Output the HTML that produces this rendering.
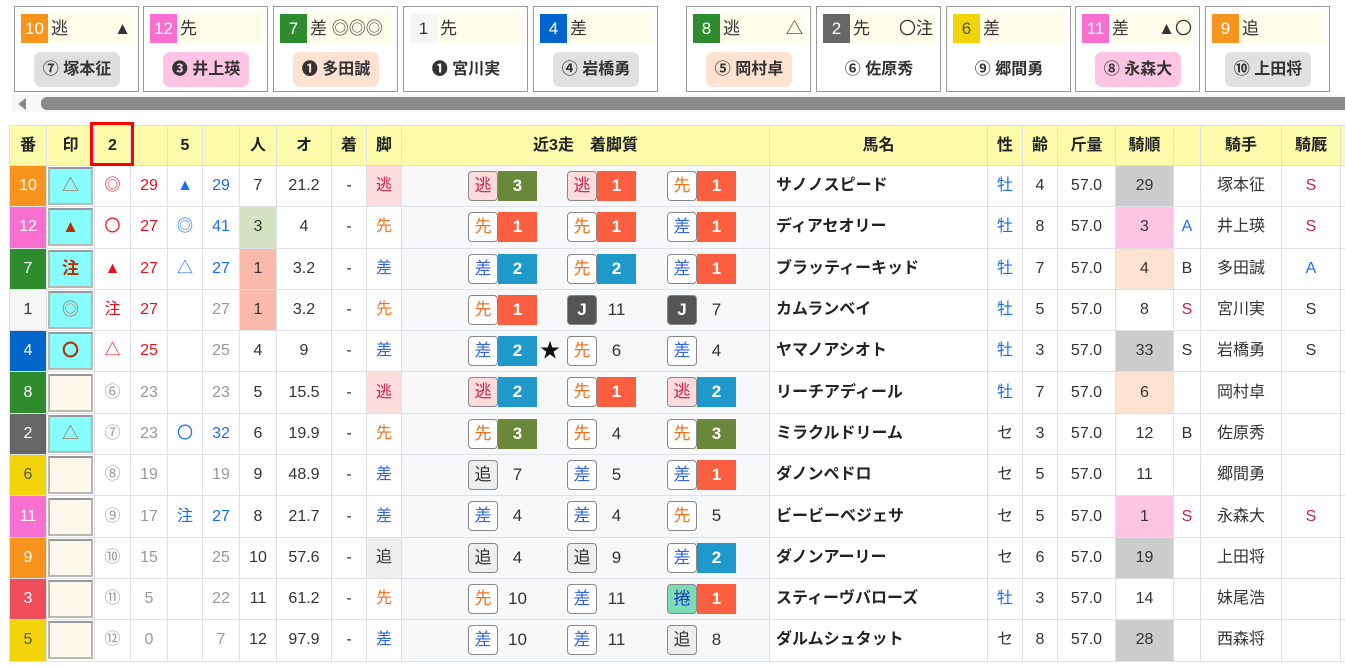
<!DOCTYPE html>
<html><head><meta charset="utf-8">
<style>
*{box-sizing:border-box;margin:0;padding:0}
body{width:1345px;height:666px;overflow:hidden;background:#fff;font-family:"Liberation Sans","Noto Sans CJK JP",sans-serif;color:#333;font-size:16px;position:relative}
.card{position:absolute;top:6px;width:125px;height:86px;border:1px solid #999;background:#fff}
.bar{position:absolute;left:6px;top:7px;width:112px;height:29px;background:#fdfde9;font-size:17px;line-height:29px}
.bar .w{display:inline-block;width:27px;height:29px;text-align:center;color:#fff;font-size:17px;vertical-align:top}
.bar .t{margin-left:3px}
.bar .m{position:absolute;right:2px;top:0}
.pill{position:absolute;left:19px;top:45px;width:86px;height:35px;border-radius:7px;text-align:center;line-height:35px;font-size:16px;font-weight:bold;color:#333}
.sb{position:absolute;left:12px;top:95px;width:1333px;height:17px;background:#f8f8f8}
.sb .th{position:absolute;left:29px;top:2px;right:0;height:13px;background:#8a8a8a;border-radius:6px 0 0 6px}
.sb .ar{position:absolute;left:6px;top:3px;width:0;height:0;border-top:6px solid transparent;border-bottom:6px solid transparent;border-right:8px solid #888}
table{position:absolute;left:9px;top:125px;border-collapse:collapse;table-layout:fixed;width:1351px}
td,th{border:1px solid #dde0e6;text-align:center;white-space:nowrap;overflow:hidden;padding:0;line-height:20px;vertical-align:middle}
th{height:40px;background:#fbfbaa;font-weight:bold;color:#222;font-size:16px}
td{height:41.3px;font-size:16px}
.red{color:#e8101c}.blu{color:#1a6fe8}.gry{color:#999}
.hn{text-align:left;padding-left:6px;font-weight:bold;color:#222}
.mk{padding:1px}
.mk div{height:38px;border:2px solid #b8b8b0;border-top-color:#999;line-height:34px;font-size:17px;color:#b05a40}
.cy{background:#88fdfd}.bg{background:#fdf8ec}
.r3{position:relative;background:#f7f8fa}
.r3 i{font-style:normal;position:absolute;top:5px;text-align:center}
.b{width:30px;height:30px;border:1px solid #888;border-radius:4px;line-height:28px;font-size:17px;background:#fff}
.n{width:39px;height:30px;line-height:30px;color:#fff;font-weight:bold;font-size:17px}
.p{width:39px;height:30px;line-height:30px;color:#333;font-size:17px}
.e{background:#fddcdc;color:#c8204f}.s{color:#f07020}.z{color:#3366dd}.o{background:#eee;color:#333}.j{background:#555;color:#fff;font-weight:bold}.k{background:#7ddbb5;color:#1a3fc0}
.c1{background:#fc5f3f}.c2{background:#1f99c9}.c3{background:#6b873a}
.w{color:#fff}
.ws1{background:#f7941d}.ws2{background:#f86fcf}.ws3{background:#2e8b2e}.ws4{background:#f5f5f5;color:#333!important}.ws5{background:#0066cc}.ws6{background:#666}.ws7{background:#f1d40a;color:#555!important}.ws8{background:#ee4d5a}
</style></head><body>

<div class="card" style="left:14px"><div class="bar"><span class="w ws1">10</span><span class="t">逃</span><span class="m">▲</span></div><div class="pill" style="background:#e0e0e0">⑦ 塚本征</div></div>
<div class="card" style="left:143px"><div class="bar"><span class="w ws2">12</span><span class="t">先</span></div><div class="pill" style="background:#fdc4e4">❸ 井上瑛</div></div>
<div class="card" style="left:273px"><div class="bar"><span class="w ws3">7</span><span class="t">差 ◎◎◎</span></div><div class="pill" style="background:#fde2d2">❶ 多田誠</div></div>
<div class="card" style="left:403px"><div class="bar"><span class="w ws4" style="color:#333">1</span><span class="t">先</span></div><div class="pill">❶ 宮川実</div></div>
<div class="card" style="left:533px"><div class="bar"><span class="w ws5">4</span><span class="t">差</span></div><div class="pill" style="background:#e0e0e0">④ 岩橋勇</div></div>
<div class="card" style="left:686px"><div class="bar"><span class="w ws3">8</span><span class="t">逃</span><span class="m">△</span></div><div class="pill" style="background:#fde2d2">⑤ 岡村卓</div></div>
<div class="card" style="left:816px"><div class="bar"><span class="w ws6">2</span><span class="t">先</span><span class="m">〇注</span></div><div class="pill">⑥ 佐原秀</div></div>
<div class="card" style="left:946px"><div class="bar"><span class="w ws7" style="color:#555">6</span><span class="t">差</span></div><div class="pill">⑨ 郷間勇</div></div>
<div class="card" style="left:1075px"><div class="bar"><span class="w ws2">11</span><span class="t">差</span><span class="m">▲〇</span></div><div class="pill" style="background:#fdc4e4">⑧ 永森大</div></div>
<div class="card" style="left:1205px"><div class="bar"><span class="w ws1">9</span><span class="t">追</span></div><div class="pill" style="background:#e0e0e0">⑩ 上田将</div></div>

<div class="sb"><div class="ar"></div><div class="th"></div></div>

<table>
<colgroup><col style="width:37px"><col style="width:48px"><col style="width:36px"><col style="width:37px"><col style="width:35px"><col style="width:37px"><col style="width:37px"><col style="width:55px"><col style="width:35px"><col style="width:35px"><col style="width:368px"><col style="width:218px"><col style="width:35px"><col style="width:35px"><col style="width:58px"><col style="width:58px"><col style="width:27px"><col style="width:81px"><col style="width:59px"><col style="width:20px"></colgroup>
<tr><th>番</th><th>印</th><th>2</th><th></th><th>5</th><th></th><th>人</th><th>オ</th><th>着</th><th>脚</th><th>近3走　着脚質</th><th>馬名</th><th>性</th><th>齢</th><th>斤量</th><th>騎順</th><th></th><th>騎手</th><th>騎厩</th><th></th></tr>

<tr><td class="w ws1">10</td><td class="mk"><div class="cy">△</div></td><td class="red">◎</td><td class="red">29</td><td class="blu">▲</td><td class="blu">29</td><td>7</td><td>21.2</td><td>-</td><td class="e">逃</td>
<td class="r3"><i class="b e" style="left:66px">逃</i><i class="n c3" style="left:96px">3</i><i class="b e" style="left:165px">逃</i><i class="n c1" style="left:195px">1</i><i class="b s" style="left:265px">先</i><i class="n c1" style="left:295px">1</i></td>
<td class="hn">サノノスピード</td><td class="blu">牡</td><td>4</td><td>57.0</td><td style="background:#ccc">29</td><td></td><td>塚本征</td><td style="color:#c8204f">S</td><td></td></tr>

<tr><td class="w ws2">12</td><td class="mk"><div class="cy" style="color:#b83000">▲</div></td><td class="red">〇</td><td class="red">27</td><td class="blu">◎</td><td class="blu">41</td><td style="background:#d6e3c3">3</td><td>4</td><td>-</td><td class="s">先</td>
<td class="r3"><i class="b s" style="left:66px">先</i><i class="n c1" style="left:96px">1</i><i class="b s" style="left:165px">先</i><i class="n c1" style="left:195px">1</i><i class="b z" style="left:265px">差</i><i class="n c1" style="left:295px">1</i></td>
<td class="hn">ディアセオリー</td><td class="blu">牡</td><td>8</td><td>57.0</td><td style="background:#fdc4e4">3</td><td class="blu">A</td><td>井上瑛</td><td style="color:#c8204f">S</td><td></td></tr>

<tr><td class="w ws3">7</td><td class="mk"><div class="cy" style="color:#b83000;font-weight:bold">注</div></td><td class="red">▲</td><td class="red">27</td><td class="blu">△</td><td class="blu">27</td><td style="background:#fbb9a9">1</td><td>3.2</td><td>-</td><td class="z">差</td>
<td class="r3"><i class="b z" style="left:66px">差</i><i class="n c2" style="left:96px">2</i><i class="b s" style="left:165px">先</i><i class="n c2" style="left:195px">2</i><i class="b z" style="left:265px">差</i><i class="n c1" style="left:295px">1</i></td>
<td class="hn">ブラッティーキッド</td><td class="blu">牡</td><td>7</td><td>57.0</td><td style="background:#fde2d2">4</td><td>B</td><td>多田誠</td><td class="blu">A</td><td></td></tr>

<tr><td class="w ws4">1</td><td class="mk"><div class="cy">◎</div></td><td class="red">注</td><td class="red">27</td><td></td><td class="gry">27</td><td style="background:#fbb9a9">1</td><td>3.2</td><td>-</td><td class="s">先</td>
<td class="r3"><i class="b s" style="left:66px">先</i><i class="n c1" style="left:96px">1</i><i class="b j" style="left:165px">J</i><i class="p" style="left:195px">11</i><i class="b j" style="left:265px">J</i><i class="p" style="left:295px">7</i></td>
<td class="hn">カムランベイ</td><td class="blu">牡</td><td>5</td><td>57.0</td><td>8</td><td style="color:#c8204f">S</td><td>宮川実</td><td>S</td><td></td></tr>

<tr><td class="w ws5">4</td><td class="mk"><div class="cy" style="color:#b83000;font-weight:bold">〇</div></td><td class="red">△</td><td class="red">25</td><td></td><td class="gry">25</td><td>4</td><td>9</td><td>-</td><td class="z">差</td>
<td class="r3"><i class="b z" style="left:66px">差</i><i class="n c2" style="left:96px">2</i><i class="p" style="left:136px;width:24px;color:#111;font-size:20px">★</i><i class="b s" style="left:165px">先</i><i class="p" style="left:195px">6</i><i class="b z" style="left:265px">差</i><i class="p" style="left:295px">4</i></td>
<td class="hn">ヤマノアシオト</td><td class="blu">牡</td><td>3</td><td>57.0</td><td style="background:#ccc">33</td><td>S</td><td>岩橋勇</td><td>S</td><td></td></tr>

<tr><td class="w ws3">8</td><td class="mk"><div class="bg"></div></td><td class="gry">⑥</td><td class="gry">23</td><td></td><td class="gry">23</td><td>5</td><td>15.5</td><td>-</td><td class="e">逃</td>
<td class="r3"><i class="b e" style="left:66px">逃</i><i class="n c2" style="left:96px">2</i><i class="b s" style="left:165px">先</i><i class="n c1" style="left:195px">1</i><i class="b e" style="left:265px">逃</i><i class="n c2" style="left:295px">2</i></td>
<td class="hn">リーチアディール</td><td class="blu">牡</td><td>7</td><td>57.0</td><td style="background:#fde2d2">6</td><td></td><td>岡村卓</td><td></td><td></td></tr>

<tr><td class="w ws6">2</td><td class="mk"><div class="cy">△</div></td><td class="gry">⑦</td><td class="gry">23</td><td class="blu">〇</td><td class="blu">32</td><td>6</td><td>19.9</td><td>-</td><td class="s">先</td>
<td class="r3"><i class="b s" style="left:66px">先</i><i class="n c3" style="left:96px">3</i><i class="b s" style="left:165px">先</i><i class="p" style="left:195px">4</i><i class="b s" style="left:265px">先</i><i class="n c3" style="left:295px">3</i></td>
<td class="hn">ミラクルドリーム</td><td>セ</td><td>3</td><td>57.0</td><td>12</td><td>B</td><td>佐原秀</td><td></td><td></td></tr>

<tr><td class="w ws7">6</td><td class="mk"><div class="bg"></div></td><td class="gry">⑧</td><td class="gry">19</td><td></td><td class="gry">19</td><td>9</td><td>48.9</td><td>-</td><td class="z">差</td>
<td class="r3"><i class="b o" style="left:66px">追</i><i class="p" style="left:96px">7</i><i class="b z" style="left:165px">差</i><i class="p" style="left:195px">5</i><i class="b z" style="left:265px">差</i><i class="n c1" style="left:295px">1</i></td>
<td class="hn">ダノンペドロ</td><td>セ</td><td>5</td><td>57.0</td><td>11</td><td></td><td>郷間勇</td><td></td><td></td></tr>

<tr><td class="w ws2">11</td><td class="mk"><div class="bg"></div></td><td class="gry">⑨</td><td class="gry">17</td><td class="blu">注</td><td class="blu">27</td><td>8</td><td>21.7</td><td>-</td><td class="z">差</td>
<td class="r3"><i class="b z" style="left:66px">差</i><i class="p" style="left:96px">4</i><i class="b z" style="left:165px">差</i><i class="p" style="left:195px">4</i><i class="b s" style="left:265px">先</i><i class="p" style="left:295px">5</i></td>
<td class="hn">ビービーベジェサ</td><td>セ</td><td>5</td><td>57.0</td><td style="background:#fdc4e4">1</td><td style="color:#c8204f">S</td><td>永森大</td><td style="color:#c8204f">S</td><td></td></tr>

<tr><td class="w ws1">9</td><td class="mk"><div class="bg"></div></td><td class="gry">⑩</td><td class="gry">15</td><td></td><td class="gry">25</td><td>10</td><td>57.6</td><td>-</td><td class="o">追</td>
<td class="r3"><i class="b o" style="left:66px">追</i><i class="p" style="left:96px">4</i><i class="b o" style="left:165px">追</i><i class="p" style="left:195px">9</i><i class="b z" style="left:265px">差</i><i class="n c2" style="left:295px">2</i></td>
<td class="hn">ダノンアーリー</td><td>セ</td><td>6</td><td>57.0</td><td style="background:#ccc">19</td><td></td><td>上田将</td><td></td><td></td></tr>

<tr><td class="w ws8">3</td><td class="mk"><div class="bg"></div></td><td class="gry">⑪</td><td class="gry">5</td><td></td><td class="gry">22</td><td>11</td><td>61.2</td><td>-</td><td class="s">先</td>
<td class="r3"><i class="b s" style="left:66px">先</i><i class="p" style="left:96px">10</i><i class="b z" style="left:165px">差</i><i class="p" style="left:195px">11</i><i class="b k" style="left:265px">捲</i><i class="n c1" style="left:295px">1</i></td>
<td class="hn">スティーヴバローズ</td><td class="blu">牡</td><td>3</td><td>57.0</td><td>14</td><td></td><td>妹尾浩</td><td></td><td></td></tr>

<tr><td class="w ws7">5</td><td class="mk"><div class="bg"></div></td><td class="gry">⑫</td><td class="gry">0</td><td></td><td class="gry">7</td><td>12</td><td>97.9</td><td>-</td><td class="z">差</td>
<td class="r3"><i class="b z" style="left:66px">差</i><i class="p" style="left:96px">10</i><i class="b z" style="left:165px">差</i><i class="p" style="left:195px">11</i><i class="b o" style="left:265px">追</i><i class="p" style="left:295px">8</i></td>
<td class="hn">ダルムシュタット</td><td>セ</td><td>8</td><td>57.0</td><td style="background:#ccc">28</td><td></td><td>西森将</td><td></td><td></td></tr>
</table>

<div style="position:absolute;left:90px;top:122px;width:44px;height:44px;border:3px solid #f00"></div>
</body></html>
